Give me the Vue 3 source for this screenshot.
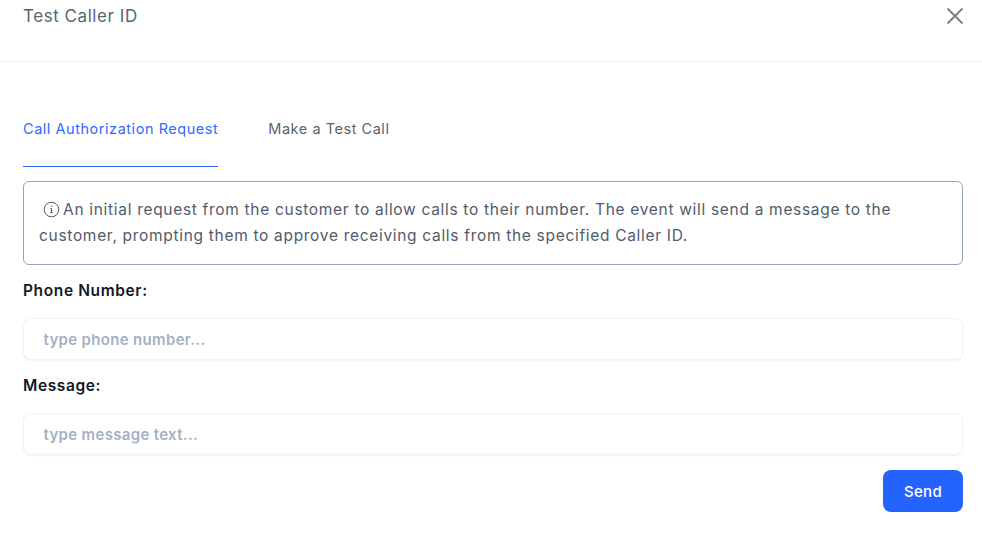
<template>
  <div class="modal">
    <header class="head">
      <h2 class="title">Test Caller ID</h2>
      <button class="close" type="button" aria-label="Close">
        <svg width="18" height="18" viewBox="0 0 18 18" fill="none" stroke="#7b7b7b" stroke-width="1.8">
          <path d="M1.5 1.5 16.5 16.5M16.5 1.5 1.5 16.5" />
        </svg>
      </button>
    </header>
    <main class="body">
      <nav class="tabs">
        <a class="tab active">Call Authorization Request</a>
        <a class="tab">Make a Test Call</a>
      </nav>
      <div class="alert">
        <svg class="info" width="17" height="17" viewBox="0 0 17 17" fill="none" stroke="#4b5563" stroke-width="1">
          <circle cx="8.5" cy="8.5" r="7.3" />
          <path d="M8.5 7.4v4.2M7.3 7.4h1.2M7.2 11.6h2.6" />
          <circle cx="8.4" cy="5.1" r=".7" fill="#4b5563" stroke="none" />
        </svg>
        An initial request from the customer to allow calls to their number. The event will send a message to the customer, prompting them to approve receiving calls from the specified Caller ID.
      </div>
      <label class="label">Phone Number:</label>
      <input class="input" type="text" placeholder="type phone number..." />
      <label class="label">Message:</label>
      <input class="input" type="text" placeholder="type message text..." />
      <div class="actions">
        <button class="send" type="button">Send</button>
      </div>
    </main>
  </div>
</template>

<script setup>
</script>

<style>
html, body { margin: 0; background: #fff; }
</style>

<style scoped>
.modal {
  width: 982px;
  height: 536px;
  overflow: hidden;
  background: #fff;
  font-family: Inter, "Noto Sans", sans-serif;
  box-sizing: border-box;
}
.head {
  height: 62px;
  box-sizing: border-box;
  border-bottom: 1px solid #eeeff1;
  display: flex;
  justify-content: space-between;
  align-items: flex-start;
  padding: 0 18px 0 23px;
}
.title {
  margin: 0;
  font-size: 17px;
  line-height: 32px;
  font-weight: 400;
  color: #5b6472;
  letter-spacing: 0.55px;
}
.close {
  border: 0;
  background: none;
  padding: 0;
  margin-top: 7px;
  width: 18px;
  height: 18px;
  display: flex;
}
.body {
  padding: 0 19px 0 23px;
}
.tabs {
  display: flex;
  gap: 50px;
  padding-top: 44px;
}
.tab {
  height: 61px;
  box-sizing: border-box;
  padding-top: 13px;
  font-size: 14.5px;
  line-height: 20px;
  letter-spacing: 0.54px;
  color: #5b6472;
}
.tab.active {
  color: #2f6bff;
  border-bottom: 1px solid #2563ff;
}
.alert {
  margin-top: 14px;
  height: 84px;
  box-sizing: border-box;
  border: 1px solid #94a3b8;
  border-radius: 6px;
  padding: 15px 15px 0;
  font-size: 15.5px;
  line-height: 26px;
  letter-spacing: 0.69px;
  color: #525b6b;
}
.info {
  vertical-align: -3px;
  margin-left: 4px;
  margin-right: -2px;
}
.label {
  display: block;
  margin-top: 16px;
  font-size: 15.5px;
  line-height: 20px;
  font-weight: 600;
  letter-spacing: 0.62px;
  color: #111827;
}
.input {
  display: block;
  width: 100%;
  height: 42px;
  margin-top: 17px;
  box-sizing: border-box;
  border: 1px solid #f1f2f5;
  border-radius: 8px;
  box-shadow: 0 1px 2px rgba(15, 23, 42, 0.05);
  padding: 0 19.5px;
  font-family: inherit;
  font-size: 15px;
  font-weight: 600;
  letter-spacing: 0.33px;
  outline: none;
  background: #fff;
}
.input::placeholder {
  color: #a6b0c2;
  opacity: 1;
}
.actions {
  display: flex;
  justify-content: flex-end;
  margin-top: 15px;
}
.send {
  width: 80px;
  height: 42px;
  border: 0;
  border-radius: 8px;
  background: #2563ff;
  color: #fff;
  font-family: inherit;
  font-size: 15px;
  font-weight: 500;
  letter-spacing: 0.3px;
  padding: 0;
}
</style>
